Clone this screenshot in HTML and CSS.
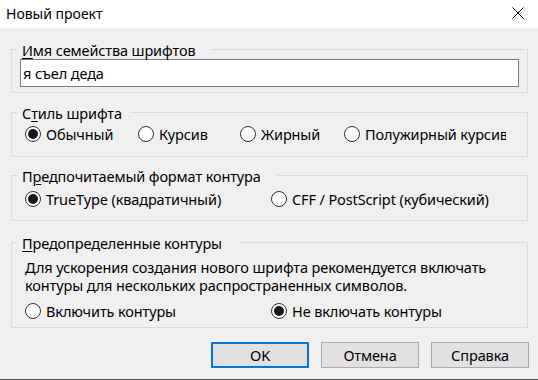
FILE: index.html
```html
<!DOCTYPE html>
<html lang="ru">
<head>
<meta charset="utf-8">
<title>Новый проект</title>
<link rel="stylesheet" href="styles.css">
</head>
<body>
<div class="window">
  <header class="titlebar">
    <span class="title">Новый проект</span>
    <svg class="close" width="12" height="12" viewBox="0 0 12 12" aria-label="Закрыть">
      <path d="M0.5 0.5 L11.5 11.5 M11.5 0.5 L0.5 11.5" stroke="#000" stroke-width="1" fill="none"/>
    </svg>
  </header>
  <main class="content">
    <section class="group g1">
      <div class="legend"><u>И</u>мя семейства шрифтов</div>
      <div class="input">я съел деда</div>
    </section>
    <section class="group g2">
      <div class="legend legend-short">С<u>т</u>иль шрифта</div>
      <div class="radios cols4">
        <label class="radio checked"><span class="circle"></span><span>Обычный</span></label>
        <label class="radio"><span class="circle"></span><span>Курсив</span></label>
        <label class="radio"><span class="circle"></span><span>Жирный</span></label>
        <label class="radio"><span class="circle"></span><span>Полужирный курсив</span></label>
      </div>
    </section>
    <section class="group g3">
      <div class="legend">П<u>р</u>едпочитаемый формат контура</div>
      <div class="radios cols2">
        <label class="radio checked"><span class="circle"></span><span>TrueType (квадратичный)</span></label>
        <label class="radio"><span class="circle"></span><span>CFF / PostScript (кубический)</span></label>
      </div>
    </section>
    <section class="group g4">
      <div class="legend"><u>П</u>редопределенные контуры</div>
      <p class="note">Для ускорения создания нового шрифта рекомендуется включать<br>контуры для нескольких распространенных символов.</p>
      <div class="radios cols2">
        <label class="radio"><span class="circle"></span><span>Включить контуры</span></label>
        <label class="radio checked"><span class="circle"></span><span>Не включать контуры</span></label>
      </div>
    </section>
    <div class="buttons">
      <button class="btn default">OK</button>
      <button class="btn">Отмена</button>
      <button class="btn">Справка</button>
    </div>
  </main>
  <div class="taskline"></div>
</div>
</body>
</html>
```
FILE: styles.css
```css
* { box-sizing: border-box; }
html, body { margin: 0; padding: 0; }
body {
  width: 538px;
  height: 380px;
  overflow: hidden;
  background: #f0f0f0;
  font-family: "Noto Sans", "Open Sans", sans-serif;
  font-size: 14.5px;
  letter-spacing: -0.12px;
  color: #000;
}
.window {
  width: 538px;
  height: 380px;
  display: flex;
  flex-direction: column;
}
.titlebar {
  height: 28px;
  background: #fff;
  display: flex;
  justify-content: space-between;
  align-items: flex-start;
  padding-left: 6px;
}
.title {
  font-size: 14px;
  letter-spacing: 0;
  line-height: 28px;
}
.close {
  margin-top: 7px;
  margin-right: 14px;
}
.content {
  display: flex;
  flex-direction: column;
}
.group {
  margin: 0 10px 0 11px;
  border: 1px solid #dcdcdc;
  padding: 0 8px;
}
.legend {
  width: fit-content;
  margin: -10px 0 0 -3px;
  padding: 0 16px 0 5px;
  height: 20px;
  line-height: 20px;
  background: #f0f0f0;
  white-space: nowrap;
}
.legend-short { padding-right: 8px; }
.legend u { text-underline-offset: 2px; }
.g1 { margin-top: 21px; padding-bottom: 5px; }
.g2 { margin-top: 19px; padding-bottom: 12px; }
.g3 { margin-top: 18px; padding-bottom: 11px; }
.g4 { margin-top: 21px; padding-bottom: 6px; }
.input {
  margin-top: -1px;
  height: 28px;
  border: 1px solid #7a7a7a;
  background: #fff;
  padding-left: 2px;
  line-height: 26px;
  white-space: nowrap;
}
.radios {
  display: grid;
  padding-left: 5px;
  height: 20px;
}
.g2 .radios { margin-top: 1px; grid-template-columns: 113px 102px 104px 162px; }
.g3 .radios { margin-top: 3px; grid-template-columns: 246px auto; }
.g4 .radios { margin-top: 7px; grid-template-columns: 246px auto; }
.radio {
  display: flex;
  align-items: center;
  gap: 5px;
  height: 20px;
  line-height: 20px;
  white-space: nowrap;
  overflow: hidden;
}
.circle {
  flex: none;
  width: 16px;
  height: 16px;
  border: 1px solid #333;
  border-radius: 50%;
  background: #fff;
  display: grid;
  place-items: center;
}
.checked .circle::after {
  content: "";
  width: 10px;
  height: 10px;
  border-radius: 50%;
  background: #1a1a1a;
}
.note {
  margin: 5px 0 0 0;
  padding-left: 5px;
  line-height: 18px;
  white-space: nowrap;
}
.buttons {
  margin: 14px 9px 0 0;
  display: flex;
  justify-content: flex-end;
  gap: 12px;
}
.btn {
  width: 98px;
  height: 26px;
  background: #e1e1e1;
  border: 1px solid #adadad;
  font: inherit;
  letter-spacing: inherit;
  color: #000;
  padding: 0;
  line-height: 22px;
}
.btn.default {
  border: 2px solid #0078d7;
}
.taskline {
  margin-top: auto;
  height: 1px;
  background: #575757;
}
```
